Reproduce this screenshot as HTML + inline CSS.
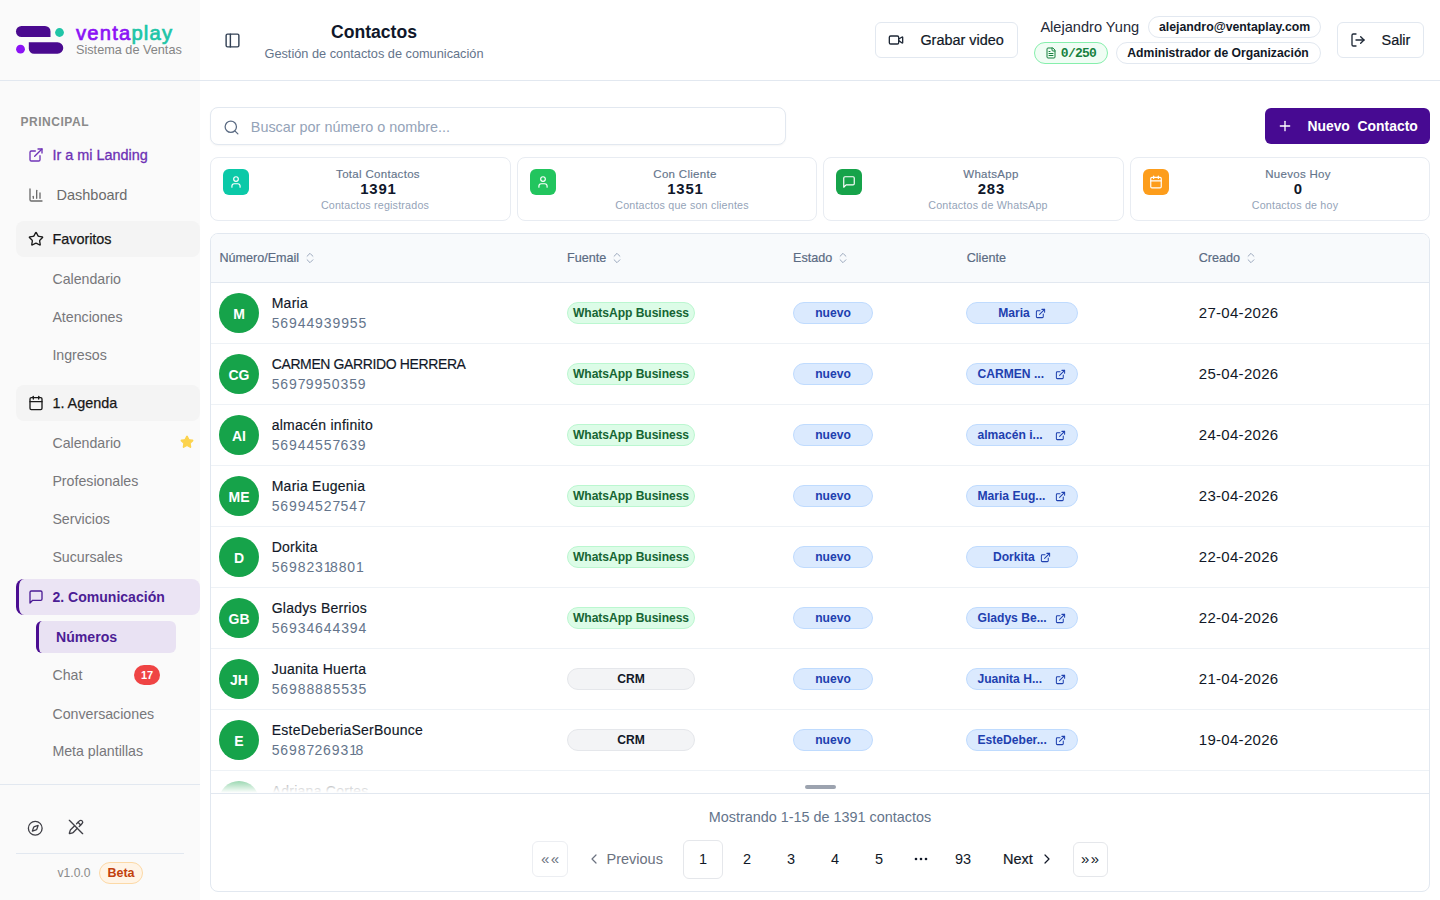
<!DOCTYPE html>
<html><head><meta charset="utf-8">
<style>
*{box-sizing:border-box;margin:0;padding:0}
html,body{width:1440px;height:900px;overflow:hidden;background:#fff;font-family:"Liberation Sans",sans-serif;color:#111827}
.t{position:absolute;white-space:nowrap;line-height:1}
.b{position:absolute}
svg{position:absolute;overflow:visible}
</style></head>
<body>
<div class="b" style="left:0px;top:0px;width:200px;height:900px;background:#fafafa"></div>
<div class="b" style="left:0px;top:80px;width:1440px;height:1px;background:#e2e8f0"></div>
<svg style="left:0;top:0" width="200" height="80">
  <path d="M21.5 26 H45 a5.5 5.5 0 0 1 5.5 5.5 V37 H21.5 a5.5 5.5 0 0 1 0 -11 Z" fill="#4a0a8f"/>
  <circle cx="59.5" cy="32.5" r="4.4" fill="#20c5a7"/>
  <circle cx="20.5" cy="49.2" r="4.4" fill="#8b12f5"/>
  <path d="M28.8 42.2 H57.5 a5.75 5.75 0 0 1 0 11.5 H34 a5.2 5.2 0 0 1 -5.2 -5.2 Z" fill="#4a0a8f"/>
</svg>
<div class="t" style="left:76.00px;top:22.70px;font-size:20.2px;color:#111827;font-weight:normal;letter-spacing:1.2px"><span style="color:#8b12f5;-webkit-text-stroke:0.7px #8b12f5">venta</span><span style="color:#20c5a7;-webkit-text-stroke:0.7px #20c5a7">play</span></div>
<div class="t" style="left:76.00px;top:43.80px;font-size:12.7px;color:#858585;font-weight:normal;">Sistema de Ventas</div>
<div class="t" style="left:20.40px;top:115.84px;font-size:12px;color:#8a8a8a;font-weight:bold;letter-spacing:0.55px">PRINCIPAL</div>
<svg style="left:28px;top:147px" width="16" height="16" viewBox="0 0 24 24" fill="none" stroke="#7034b8" stroke-width="2" stroke-linecap="round" stroke-linejoin="round"><path d="M15 3h6v6"/><path d="M10 14 21 3"/><path d="M18 13v6a2 2 0 0 1-2 2H5a2 2 0 0 1-2-2V8a2 2 0 0 1 2-2h6"/></svg>
<div class="t" style="left:52.40px;top:148.17px;font-size:14.45px;color:#6d31b5;font-weight:normal;-webkit-text-stroke:0.3px #6d31b5">Ir a mi Landing</div>
<svg style="left:28px;top:187px" width="16" height="16" viewBox="0 0 24 24" fill="none" stroke="#6b6b6b" stroke-width="2" stroke-linecap="round" stroke-linejoin="round"><path d="M3 3v16a2 2 0 0 0 2 2h16"/><path d="M18 17V9"/><path d="M13 17V5"/><path d="M8 17v-3"/></svg>
<div class="t" style="left:56.50px;top:188.43px;font-size:14.5px;color:#6b6b6b;font-weight:normal;">Dashboard</div>
<div class="b" style="left:16px;top:221px;width:184px;height:36px;background:#f4f4f4;border-radius:8px"></div>
<svg style="left:28px;top:231px" width="16" height="16" viewBox="0 0 24 24" fill="none" stroke="#1a1a1a" stroke-width="2" stroke-linecap="round" stroke-linejoin="round"><path d="M11.525 2.295a.53.53 0 0 1 .95 0l2.31 4.679a2.123 2.123 0 0 0 1.595 1.16l5.166.756a.53.53 0 0 1 .294.904l-3.736 3.638a2.123 2.123 0 0 0-.611 1.878l.882 5.14a.53.53 0 0 1-.771.56l-4.618-2.428a2.122 2.122 0 0 0-1.973 0L6.396 21.01a.53.53 0 0 1-.77-.56l.881-5.139a2.122 2.122 0 0 0-.611-1.879L2.16 9.795a.53.53 0 0 1 .294-.906l5.165-.755a2.122 2.122 0 0 0 1.597-1.16z"/></svg>
<div class="t" style="left:52.40px;top:231.61px;font-size:14.4px;color:#171717;font-weight:normal;-webkit-text-stroke:0.25px #171717">Favoritos</div>
<div class="t" style="left:52.40px;top:271.78px;font-size:14.2px;color:#77777b;font-weight:normal;">Calendario</div>
<div class="t" style="left:52.40px;top:309.78px;font-size:14.2px;color:#77777b;font-weight:normal;">Atenciones</div>
<div class="t" style="left:52.40px;top:347.78px;font-size:14.2px;color:#77777b;font-weight:normal;">Ingresos</div>
<div class="b" style="left:16px;top:385px;width:184px;height:36px;background:#f4f4f4;border-radius:8px"></div>
<svg style="left:28px;top:395px" width="16" height="16" viewBox="0 0 24 24" fill="none" stroke="#1a1a1a" stroke-width="2" stroke-linecap="round" stroke-linejoin="round"><path d="M8 2v4"/><path d="M16 2v4"/><rect width="18" height="18" x="3" y="4" rx="2"/><path d="M3 10h18"/></svg>
<div class="t" style="left:52.40px;top:395.61px;font-size:14.4px;color:#171717;font-weight:normal;-webkit-text-stroke:0.25px #171717">1. Agenda</div>
<div class="t" style="left:52.40px;top:435.78px;font-size:14.2px;color:#77777b;font-weight:normal;">Calendario</div>
<div class="t" style="left:52.40px;top:473.78px;font-size:14.2px;color:#77777b;font-weight:normal;">Profesionales</div>
<div class="t" style="left:52.40px;top:511.78px;font-size:14.2px;color:#77777b;font-weight:normal;">Servicios</div>
<div class="t" style="left:52.40px;top:549.78px;font-size:14.2px;color:#77777b;font-weight:normal;">Sucursales</div>
<svg style="left:179.5px;top:435px" width="14" height="14" viewBox="0 0 24 24" fill="none" stroke="#fcd34d" stroke-width="2" stroke-linecap="round" stroke-linejoin="round"><path fill="#fcd34d" d="M11.525 2.295a.53.53 0 0 1 .95 0l2.31 4.679a2.123 2.123 0 0 0 1.595 1.16l5.166.756a.53.53 0 0 1 .294.904l-3.736 3.638a2.123 2.123 0 0 0-.611 1.878l.882 5.14a.53.53 0 0 1-.771.56l-4.618-2.428a2.122 2.122 0 0 0-1.973 0L6.396 21.01a.53.53 0 0 1-.77-.56l.881-5.139a2.122 2.122 0 0 0-.611-1.879L2.16 9.795a.53.53 0 0 1 .294-.906l5.165-.755a2.122 2.122 0 0 0 1.597-1.16z"/></svg>
<div class="b" style="left:16px;top:579px;width:184px;height:36px;background:#ebe4f4;border-radius:8px;border-left:3.5px solid #4a0d91"></div>
<svg style="left:28px;top:589px" width="16" height="16" viewBox="0 0 24 24" fill="none" stroke="#4c1d95" stroke-width="2" stroke-linecap="round" stroke-linejoin="round"><path d="M21 15a2 2 0 0 1-2 2H7l-4 4V5a2 2 0 0 1 2-2h14a2 2 0 0 1 2 2z"/></svg>
<div class="t" style="left:52.40px;top:589.91px;font-size:14.05px;color:#4c1d95;font-weight:bold;">2. Comunicación</div>
<div class="b" style="left:36px;top:621px;width:140px;height:32px;background:#e9e2f3;border-radius:6px;border-left:3.5px solid #4a0d91"></div>
<div class="t" style="left:56.00px;top:630.26px;font-size:14.1px;color:#4c1d95;font-weight:bold;">Números</div>
<div class="t" style="left:52.40px;top:668.08px;font-size:14.2px;color:#77777b;font-weight:normal;">Chat</div>
<div class="b" style="left:134px;top:665px;width:26px;height:20px;background:#ef4444;border-radius:10px"></div>
<div class="t" style="left:-153.00px;width:600px;text-align:center;top:669.99px;font-size:11px;color:#fff;font-weight:bold;">17</div>
<div class="t" style="left:52.40px;top:706.58px;font-size:14.2px;color:#77777b;font-weight:normal;">Conversaciones</div>
<div class="t" style="left:52.40px;top:744.08px;font-size:14.2px;color:#77777b;font-weight:normal;">Meta plantillas</div>
<div class="b" style="left:0px;top:784px;width:200px;height:1px;background:#e2e8f0"></div>
<svg style="left:27.2px;top:819.5px" width="16.5" height="16.5" viewBox="0 0 24 24" fill="none" stroke="#3f3f46" stroke-width="1.9" stroke-linecap="round" stroke-linejoin="round"><circle cx="12" cy="12" r="10"/><path d="m16.24 7.76-1.804 5.411a2 2 0 0 1-1.265 1.265L7.76 16.24l1.804-5.411a2 2 0 0 1 1.265-1.265z"/></svg>
<svg style="left:68px;top:819px" width="16" height="16" viewBox="0 0 24 24" fill="none" stroke="#3f3f46" stroke-width="2" stroke-linecap="round" stroke-linejoin="round"><path d="m10 10-6.157 6.162a2 2 0 0 0-.5.833l-1.322 4.36a.5.5 0 0 0 .622.624l4.358-1.323a2 2 0 0 0 .83-.5L14 13.982"/><path d="m12.829 7.172 4.359-4.346a1 1 0 1 1 3.986 3.986l-4.353 4.353"/><path d="m15 5 4 4"/><path d="m2 2 20 20"/></svg>
<div class="b" style="left:16px;top:853px;width:168px;height:1px;background:#e2e8f0"></div>
<div class="t" style="left:57.60px;top:867.30px;font-size:12.05px;color:#8a8a8a;font-weight:normal;">v1.0.0</div>
<div class="b" style="left:99px;top:862px;width:44px;height:22px;background:#fff4e6;border:1px solid #fcd9a6;border-radius:11px"></div>
<div class="t" style="left:-179.00px;width:600px;text-align:center;top:867.22px;font-size:12.5px;color:#c2410c;font-weight:bold;">Beta</div>
<svg style="left:223.5px;top:31.5px" width="17" height="17" viewBox="0 0 24 24" fill="none" stroke="#334155" stroke-width="2" stroke-linecap="round" stroke-linejoin="round"><rect width="18" height="18" x="3" y="3" rx="2"/><path d="M9 3v18"/></svg>
<div class="t" style="left:74.00px;width:600px;text-align:center;top:23.90px;font-size:17.6px;color:#0f172a;font-weight:bold;">Contactos</div>
<div class="t" style="left:74.00px;width:600px;text-align:center;top:48.26px;font-size:12.75px;color:#64748b;font-weight:normal;">Gestión de contactos de comunicación</div>
<div class="b" style="left:875px;top:22px;width:143px;height:36px;border:1px solid #e2e8f0;border-radius:6px;background:#fff"></div>
<svg style="left:888px;top:32px" width="16" height="16" viewBox="0 0 24 24" fill="none" stroke="#1f2937" stroke-width="2" stroke-linecap="round" stroke-linejoin="round"><path d="m16 13 5.223 3.482a.5.5 0 0 0 .777-.416V7.87a.5.5 0 0 0-.752-.432L16 10.5"/><rect x="2" y="6" width="14" height="12" rx="2"/></svg>
<div class="t" style="left:920.40px;top:32.77px;font-size:14.45px;color:#111827;font-weight:normal;-webkit-text-stroke:0.2px #111827">Grabar video</div>
<div class="t" style="left:1040.40px;top:19.84px;font-size:14.6px;color:#1f2937;font-weight:normal;">Alejandro Yung</div>
<div class="b" style="left:1148px;top:16px;width:173px;height:22px;border:1px solid #e2e8f0;border-radius:11px;background:#fff"></div>
<div class="t" style="left:1159.00px;top:21.39px;font-size:12.3px;color:#111827;font-weight:bold;">alejandro@ventaplay.com</div>
<div class="b" style="left:1034px;top:42px;width:74px;height:22px;border:1px solid #86efac;border-radius:11px;background:#f0fdf4"></div>
<svg style="left:1045px;top:47px" width="12" height="12" viewBox="0 0 24 24" fill="none" stroke="#15803d" stroke-width="2" stroke-linecap="round" stroke-linejoin="round"><path d="M15 2H6a2 2 0 0 0-2 2v16a2 2 0 0 0 2 2h12a2 2 0 0 0 2-2V7Z"/><path d="M14 2v4a2 2 0 0 0 2 2h4"/><path d="M10 9H8"/><path d="M16 13H8"/><path d="M16 17H8"/></svg>
<div class="t" style="left:1060.8px;top:46.91px;font-size:13px;letter-spacing:-0.72px;color:#15803d;font-weight:bold;font-family:'Liberation Mono',monospace">0/250</div>
<div class="b" style="left:1116px;top:42px;width:205px;height:22px;border:1px solid #e2e8f0;border-radius:11px;background:#fff"></div>
<div class="t" style="left:1127.30px;top:47.37px;font-size:12.2px;color:#111827;font-weight:bold;">Administrador de Organización</div>
<div class="b" style="left:1337px;top:22px;width:87px;height:36px;border:1px solid #e2e8f0;border-radius:6px;background:#fff"></div>
<svg style="left:1350px;top:32px" width="16" height="16" viewBox="0 0 24 24" fill="none" stroke="#1f2937" stroke-width="2" stroke-linecap="round" stroke-linejoin="round"><path d="M9 21H5a2 2 0 0 1-2-2V5a2 2 0 0 1 2-2h4"/><polyline points="16 17 21 12 16 7"/><line x1="21" x2="9" y1="12" y2="12"/></svg>
<div class="t" style="left:1381.50px;top:32.77px;font-size:14.45px;color:#111827;font-weight:normal;-webkit-text-stroke:0.2px #111827">Salir</div>
<div class="b" style="left:210px;top:107px;width:576px;height:38px;border:1px solid #e2e8f0;border-radius:8px;background:#fff;box-shadow:0 1px 2px rgba(0,0,0,0.04)"></div>
<svg style="left:222.5px;top:118.5px" width="17" height="17" viewBox="0 0 24 24" fill="none" stroke="#5b6b83" stroke-width="1.8" stroke-linecap="round" stroke-linejoin="round"><circle cx="11" cy="11" r="8"/><path d="m21 21-4.3-4.3"/></svg>
<div class="t" style="left:250.80px;top:119.91px;font-size:14.4px;color:#94a3b8;font-weight:normal;">Buscar por número o nombre...</div>
<div class="b" style="left:1265px;top:108px;width:165px;height:36px;background:#470a92;border-radius:6px"></div>
<svg style="left:1277px;top:118px" width="16" height="16" viewBox="0 0 24 24" fill="none" stroke="#ffffff" stroke-width="2" stroke-linecap="round" stroke-linejoin="round"><path d="M5 12h14"/><path d="M12 5v14"/></svg>
<div class="t" style="left:1307.40px;top:120.03px;font-size:13.9px;color:#ffffff;font-weight:bold;">Nuevo&nbsp; Contacto</div>
<div class="b" style="left:210px;top:157px;width:301px;height:64px;border:1px solid #e8ecf2;border-radius:8px;background:#fff"></div>
<div class="b" style="left:222.5px;top:169px;width:26px;height:26px;background:#0bc9a8;border-radius:6px"></div>
<svg style="left:228.5px;top:175px" width="14" height="14" viewBox="0 0 24 24" fill="none" stroke="#ffffff" stroke-width="2" stroke-linecap="round" stroke-linejoin="round"><path d="M19 21v-2a4 4 0 0 0-4-4H9a4 4 0 0 0-4 4v2"/><circle cx="12" cy="7" r="4"/></svg>
<div class="t" style="left:78.00px;width:600px;text-align:center;top:169.07px;font-size:11.5px;color:#64748b;font-weight:normal;letter-spacing:0.3px;-webkit-text-stroke:0.15px #64748b">Total Contactos</div>
<div class="t" style="left:78.40px;width:600px;text-align:center;top:182.19px;font-size:14.9px;color:#0f172a;font-weight:bold;letter-spacing:0.8px">1391</div>
<div class="t" style="left:75.00px;width:600px;text-align:center;top:200.24px;font-size:10.7px;color:#94a3b8;font-weight:normal;letter-spacing:0.2px">Contactos registrados</div>
<div class="b" style="left:517px;top:157px;width:300px;height:64px;border:1px solid #e8ecf2;border-radius:8px;background:#fff"></div>
<div class="b" style="left:529.5px;top:169px;width:26px;height:26px;background:#22c55e;border-radius:6px"></div>
<svg style="left:535.5px;top:175px" width="14" height="14" viewBox="0 0 24 24" fill="none" stroke="#ffffff" stroke-width="2" stroke-linecap="round" stroke-linejoin="round"><path d="M19 21v-2a4 4 0 0 0-4-4H9a4 4 0 0 0-4 4v2"/><circle cx="12" cy="7" r="4"/></svg>
<div class="t" style="left:385.00px;width:600px;text-align:center;top:169.07px;font-size:11.5px;color:#64748b;font-weight:normal;letter-spacing:0.3px;-webkit-text-stroke:0.15px #64748b">Con Cliente</div>
<div class="t" style="left:385.40px;width:600px;text-align:center;top:182.19px;font-size:14.9px;color:#0f172a;font-weight:bold;letter-spacing:0.8px">1351</div>
<div class="t" style="left:382.00px;width:600px;text-align:center;top:200.24px;font-size:10.7px;color:#94a3b8;font-weight:normal;letter-spacing:0.2px">Contactos que son clientes</div>
<div class="b" style="left:823px;top:157px;width:301px;height:64px;border:1px solid #e8ecf2;border-radius:8px;background:#fff"></div>
<div class="b" style="left:835.5px;top:169px;width:26px;height:26px;background:#16a34a;border-radius:6px"></div>
<svg style="left:841.5px;top:175px" width="14" height="14" viewBox="0 0 24 24" fill="none" stroke="#ffffff" stroke-width="2" stroke-linecap="round" stroke-linejoin="round"><path d="M21 15a2 2 0 0 1-2 2H7l-4 4V5a2 2 0 0 1 2-2h14a2 2 0 0 1 2 2z"/></svg>
<div class="t" style="left:691.00px;width:600px;text-align:center;top:169.07px;font-size:11.5px;color:#64748b;font-weight:normal;letter-spacing:0.3px;-webkit-text-stroke:0.15px #64748b">WhatsApp</div>
<div class="t" style="left:691.40px;width:600px;text-align:center;top:182.19px;font-size:14.9px;color:#0f172a;font-weight:bold;letter-spacing:0.8px">283</div>
<div class="t" style="left:688.00px;width:600px;text-align:center;top:200.24px;font-size:10.7px;color:#94a3b8;font-weight:normal;letter-spacing:0.2px">Contactos de WhatsApp</div>
<div class="b" style="left:1130px;top:157px;width:300px;height:64px;border:1px solid #e8ecf2;border-radius:8px;background:#fff"></div>
<div class="b" style="left:1142.5px;top:169px;width:26px;height:26px;background:#fd9d1b;border-radius:6px"></div>
<svg style="left:1148.5px;top:175px" width="14" height="14" viewBox="0 0 24 24" fill="none" stroke="#ffffff" stroke-width="2" stroke-linecap="round" stroke-linejoin="round"><path d="M8 2v4"/><path d="M16 2v4"/><rect width="18" height="18" x="3" y="4" rx="2"/><path d="M3 10h18"/></svg>
<div class="t" style="left:998.00px;width:600px;text-align:center;top:169.07px;font-size:11.5px;color:#64748b;font-weight:normal;letter-spacing:0.3px;-webkit-text-stroke:0.15px #64748b">Nuevos Hoy</div>
<div class="t" style="left:998.40px;width:600px;text-align:center;top:182.19px;font-size:14.9px;color:#0f172a;font-weight:bold;letter-spacing:0.8px">0</div>
<div class="t" style="left:995.00px;width:600px;text-align:center;top:200.24px;font-size:10.7px;color:#94a3b8;font-weight:normal;letter-spacing:0.2px">Contactos de hoy</div>
<div class="b" style="left:210px;top:233px;width:1220px;height:659px;border:1px solid #e2e8f0;border-radius:8px;background:#fff;overflow:hidden"></div>
<div class="b" style="left:211px;top:234px;width:1218px;height:48.5px;background:#f8fafc;border-radius:7px 7px 0 0"></div>
<div class="b" style="left:211px;top:282px;width:1218px;height:1px;background:#e2e8f0"></div>
<div class="t" style="left:219.40px;top:251.83px;font-size:12.6px;color:#5b6b83;font-weight:normal;-webkit-text-stroke:0.2px #5b6b83">Número/Email</div>
<svg style="left:302.723953125px;top:251px" width="14" height="14" viewBox="0 0 24 24" fill="none" stroke="#94a3b8" stroke-width="1.6" stroke-linecap="round" stroke-linejoin="round"><path d="m7 15 5 5 5-5"/><path d="m7 9 5-5 5 5"/></svg>
<div class="t" style="left:567.00px;top:251.83px;font-size:12.6px;color:#5b6b83;font-weight:normal;-webkit-text-stroke:0.2px #5b6b83">Fuente</div>
<svg style="left:609.728328125px;top:251px" width="14" height="14" viewBox="0 0 24 24" fill="none" stroke="#94a3b8" stroke-width="1.6" stroke-linecap="round" stroke-linejoin="round"><path d="m7 15 5 5 5-5"/><path d="m7 9 5-5 5 5"/></svg>
<div class="t" style="left:793.10px;top:251.83px;font-size:12.6px;color:#5b6b83;font-weight:normal;-webkit-text-stroke:0.2px #5b6b83">Estado</div>
<svg style="left:835.828328125px;top:251px" width="14" height="14" viewBox="0 0 24 24" fill="none" stroke="#94a3b8" stroke-width="1.6" stroke-linecap="round" stroke-linejoin="round"><path d="m7 15 5 5 5-5"/><path d="m7 9 5-5 5 5"/></svg>
<div class="t" style="left:966.70px;top:251.83px;font-size:12.6px;color:#5b6b83;font-weight:normal;-webkit-text-stroke:0.2px #5b6b83">Cliente</div>
<div class="t" style="left:1198.75px;top:251.83px;font-size:12.6px;color:#5b6b83;font-weight:normal;-webkit-text-stroke:0.2px #5b6b83">Creado</div>
<svg style="left:1243.577015625px;top:251px" width="14" height="14" viewBox="0 0 24 24" fill="none" stroke="#94a3b8" stroke-width="1.6" stroke-linecap="round" stroke-linejoin="round"><path d="m7 15 5 5 5-5"/><path d="m7 9 5-5 5 5"/></svg>
<div class="b" style="left:211px;top:283px;width:1218px;height:510.5px;overflow:hidden">
<div class="b" style="left:0px;top:60px;width:1218px;height:1px;background:#eef2f6"></div>
<div class="b" style="left:8px;top:10px;width:40px;height:40px;background:#16a34a;border-radius:50%"></div>
<div class="t" style="left:-272.00px;width:600px;text-align:center;top:23.55px;font-size:14px;color:#ffffff;font-weight:bold;">M</div>
<div class="t" style="left:60.70px;top:12.95px;font-size:14px;color:#111827;font-weight:normal;letter-spacing:0.25px;-webkit-text-stroke:0.15px #111827">Maria</div>
<div class="t" style="left:60.70px;top:33.15px;font-size:14px;color:#64748b;font-weight:normal;letter-spacing:0.9px">56944939955</div>
<div class="b" style="left:356px;top:19px;width:128px;height:22px;background:#dcfce7;border:1px solid #bbf7d0;border-radius:11px"></div>
<div class="t" style="left:120.00px;width:600px;text-align:center;top:23.86px;font-size:12.1px;color:#166534;font-weight:bold;letter-spacing:-0.05px">WhatsApp Business</div>
<div class="b" style="left:582px;top:19px;width:80px;height:22px;background:#dbeafe;border:1px solid #bfdbfe;border-radius:11px"></div>
<div class="t" style="left:322.00px;width:600px;text-align:center;top:23.86px;font-size:12.1px;color:#1e40af;font-weight:bold;">nuevo</div>
<div class="b" style="left:755px;top:19px;width:112px;height:22px;background:#dbeafe;border:1px solid #bfdbfe;border-radius:11px"></div>
<div class="t" style="left:787.17px;top:23.86px;font-size:12.1px;color:#1e40af;font-weight:bold;">Maria</div>
<svg style="left:823.8271484375px;top:24.5px" width="11" height="11" viewBox="0 0 24 24" fill="none" stroke="#1e40af" stroke-width="2.2" stroke-linecap="round" stroke-linejoin="round"><path d="M15 3h6v6"/><path d="M10 14 21 3"/><path d="M18 13v6a2 2 0 0 1-2 2H5a2 2 0 0 1-2-2V8a2 2 0 0 1 2-2h6"/></svg>
<div class="t" style="left:987.75px;top:22.30px;font-size:15px;color:#111827;font-weight:normal;letter-spacing:0.3px">27-04-2026</div>
<div class="b" style="left:0px;top:121px;width:1218px;height:1px;background:#eef2f6"></div>
<div class="b" style="left:8px;top:71px;width:40px;height:40px;background:#16a34a;border-radius:50%"></div>
<div class="t" style="left:-272.00px;width:600px;text-align:center;top:84.55px;font-size:14px;color:#ffffff;font-weight:bold;">CG</div>
<div class="t" style="left:60.70px;top:73.95px;font-size:14px;color:#111827;font-weight:normal;letter-spacing:-0.38px;-webkit-text-stroke:0.15px #111827">CARMEN GARRIDO HERRERA</div>
<div class="t" style="left:60.70px;top:94.15px;font-size:14px;color:#64748b;font-weight:normal;letter-spacing:0.9px">569<span style="letter-spacing:0.2px">7</span>9950359</div>
<div class="b" style="left:356px;top:80px;width:128px;height:22px;background:#dcfce7;border:1px solid #bbf7d0;border-radius:11px"></div>
<div class="t" style="left:120.00px;width:600px;text-align:center;top:84.86px;font-size:12.1px;color:#166534;font-weight:bold;letter-spacing:-0.05px">WhatsApp Business</div>
<div class="b" style="left:582px;top:80px;width:80px;height:22px;background:#dbeafe;border:1px solid #bfdbfe;border-radius:11px"></div>
<div class="t" style="left:322.00px;width:600px;text-align:center;top:84.86px;font-size:12.1px;color:#1e40af;font-weight:bold;">nuevo</div>
<div class="b" style="left:755px;top:80px;width:112px;height:22px;background:#dbeafe;border:1px solid #bfdbfe;border-radius:11px"></div>
<div class="t" style="left:766.50px;top:84.86px;font-size:12.1px;color:#1e40af;font-weight:bold;">CARMEN ...</div>
<svg style="left:844px;top:85.5px" width="11" height="11" viewBox="0 0 24 24" fill="none" stroke="#1e40af" stroke-width="2.2" stroke-linecap="round" stroke-linejoin="round"><path d="M15 3h6v6"/><path d="M10 14 21 3"/><path d="M18 13v6a2 2 0 0 1-2 2H5a2 2 0 0 1-2-2V8a2 2 0 0 1 2-2h6"/></svg>
<div class="t" style="left:987.75px;top:83.30px;font-size:15px;color:#111827;font-weight:normal;letter-spacing:0.3px">25-04-2026</div>
<div class="b" style="left:0px;top:182px;width:1218px;height:1px;background:#eef2f6"></div>
<div class="b" style="left:8px;top:132px;width:40px;height:40px;background:#16a34a;border-radius:50%"></div>
<div class="t" style="left:-272.00px;width:600px;text-align:center;top:145.55px;font-size:14px;color:#ffffff;font-weight:bold;">AI</div>
<div class="t" style="left:60.70px;top:134.95px;font-size:14px;color:#111827;font-weight:normal;letter-spacing:0.25px;-webkit-text-stroke:0.15px #111827">almacén infinito</div>
<div class="t" style="left:60.70px;top:155.15px;font-size:14px;color:#64748b;font-weight:normal;letter-spacing:0.9px">5694455<span style="letter-spacing:0.2px">7</span>639</div>
<div class="b" style="left:356px;top:141px;width:128px;height:22px;background:#dcfce7;border:1px solid #bbf7d0;border-radius:11px"></div>
<div class="t" style="left:120.00px;width:600px;text-align:center;top:145.86px;font-size:12.1px;color:#166534;font-weight:bold;letter-spacing:-0.05px">WhatsApp Business</div>
<div class="b" style="left:582px;top:141px;width:80px;height:22px;background:#dbeafe;border:1px solid #bfdbfe;border-radius:11px"></div>
<div class="t" style="left:322.00px;width:600px;text-align:center;top:145.86px;font-size:12.1px;color:#1e40af;font-weight:bold;">nuevo</div>
<div class="b" style="left:755px;top:141px;width:112px;height:22px;background:#dbeafe;border:1px solid #bfdbfe;border-radius:11px"></div>
<div class="t" style="left:766.50px;top:145.86px;font-size:12.1px;color:#1e40af;font-weight:bold;">almacén i...</div>
<svg style="left:844px;top:146.5px" width="11" height="11" viewBox="0 0 24 24" fill="none" stroke="#1e40af" stroke-width="2.2" stroke-linecap="round" stroke-linejoin="round"><path d="M15 3h6v6"/><path d="M10 14 21 3"/><path d="M18 13v6a2 2 0 0 1-2 2H5a2 2 0 0 1-2-2V8a2 2 0 0 1 2-2h6"/></svg>
<div class="t" style="left:987.75px;top:144.30px;font-size:15px;color:#111827;font-weight:normal;letter-spacing:0.3px">24-04-2026</div>
<div class="b" style="left:0px;top:243px;width:1218px;height:1px;background:#eef2f6"></div>
<div class="b" style="left:8px;top:193px;width:40px;height:40px;background:#16a34a;border-radius:50%"></div>
<div class="t" style="left:-272.00px;width:600px;text-align:center;top:206.55px;font-size:14px;color:#ffffff;font-weight:bold;">ME</div>
<div class="t" style="left:60.70px;top:195.95px;font-size:14px;color:#111827;font-weight:normal;letter-spacing:0.25px;-webkit-text-stroke:0.15px #111827">Maria Eugenia</div>
<div class="t" style="left:60.70px;top:216.15px;font-size:14px;color:#64748b;font-weight:normal;letter-spacing:0.9px">5699452<span style="letter-spacing:0.2px">7</span>54<span style="letter-spacing:0.2px">7</span></div>
<div class="b" style="left:356px;top:202px;width:128px;height:22px;background:#dcfce7;border:1px solid #bbf7d0;border-radius:11px"></div>
<div class="t" style="left:120.00px;width:600px;text-align:center;top:206.86px;font-size:12.1px;color:#166534;font-weight:bold;letter-spacing:-0.05px">WhatsApp Business</div>
<div class="b" style="left:582px;top:202px;width:80px;height:22px;background:#dbeafe;border:1px solid #bfdbfe;border-radius:11px"></div>
<div class="t" style="left:322.00px;width:600px;text-align:center;top:206.86px;font-size:12.1px;color:#1e40af;font-weight:bold;">nuevo</div>
<div class="b" style="left:755px;top:202px;width:112px;height:22px;background:#dbeafe;border:1px solid #bfdbfe;border-radius:11px"></div>
<div class="t" style="left:766.50px;top:206.86px;font-size:12.1px;color:#1e40af;font-weight:bold;">Maria Eug...</div>
<svg style="left:844px;top:207.5px" width="11" height="11" viewBox="0 0 24 24" fill="none" stroke="#1e40af" stroke-width="2.2" stroke-linecap="round" stroke-linejoin="round"><path d="M15 3h6v6"/><path d="M10 14 21 3"/><path d="M18 13v6a2 2 0 0 1-2 2H5a2 2 0 0 1-2-2V8a2 2 0 0 1 2-2h6"/></svg>
<div class="t" style="left:987.75px;top:205.30px;font-size:15px;color:#111827;font-weight:normal;letter-spacing:0.3px">23-04-2026</div>
<div class="b" style="left:0px;top:304px;width:1218px;height:1px;background:#eef2f6"></div>
<div class="b" style="left:8px;top:254px;width:40px;height:40px;background:#16a34a;border-radius:50%"></div>
<div class="t" style="left:-272.00px;width:600px;text-align:center;top:267.55px;font-size:14px;color:#ffffff;font-weight:bold;">D</div>
<div class="t" style="left:60.70px;top:256.95px;font-size:14px;color:#111827;font-weight:normal;letter-spacing:0.25px;-webkit-text-stroke:0.15px #111827">Dorkita</div>
<div class="t" style="left:60.70px;top:277.15px;font-size:14px;color:#64748b;font-weight:normal;letter-spacing:0.9px">569823<span style="letter-spacing:-1.6px">1</span>880<span style="letter-spacing:-1.6px">1</span></div>
<div class="b" style="left:356px;top:263px;width:128px;height:22px;background:#dcfce7;border:1px solid #bbf7d0;border-radius:11px"></div>
<div class="t" style="left:120.00px;width:600px;text-align:center;top:267.86px;font-size:12.1px;color:#166534;font-weight:bold;letter-spacing:-0.05px">WhatsApp Business</div>
<div class="b" style="left:582px;top:263px;width:80px;height:22px;background:#dbeafe;border:1px solid #bfdbfe;border-radius:11px"></div>
<div class="t" style="left:322.00px;width:600px;text-align:center;top:267.86px;font-size:12.1px;color:#1e40af;font-weight:bold;">nuevo</div>
<div class="b" style="left:755px;top:263px;width:112px;height:22px;background:#dbeafe;border:1px solid #bfdbfe;border-radius:11px"></div>
<div class="t" style="left:781.97px;top:267.86px;font-size:12.1px;color:#1e40af;font-weight:bold;">Dorkita</div>
<svg style="left:829.03369140625px;top:268.5px" width="11" height="11" viewBox="0 0 24 24" fill="none" stroke="#1e40af" stroke-width="2.2" stroke-linecap="round" stroke-linejoin="round"><path d="M15 3h6v6"/><path d="M10 14 21 3"/><path d="M18 13v6a2 2 0 0 1-2 2H5a2 2 0 0 1-2-2V8a2 2 0 0 1 2-2h6"/></svg>
<div class="t" style="left:987.75px;top:266.30px;font-size:15px;color:#111827;font-weight:normal;letter-spacing:0.3px">22-04-2026</div>
<div class="b" style="left:0px;top:365px;width:1218px;height:1px;background:#eef2f6"></div>
<div class="b" style="left:8px;top:315px;width:40px;height:40px;background:#16a34a;border-radius:50%"></div>
<div class="t" style="left:-272.00px;width:600px;text-align:center;top:328.55px;font-size:14px;color:#ffffff;font-weight:bold;">GB</div>
<div class="t" style="left:60.70px;top:317.95px;font-size:14px;color:#111827;font-weight:normal;letter-spacing:0.25px;-webkit-text-stroke:0.15px #111827">Gladys Berrios</div>
<div class="t" style="left:60.70px;top:338.15px;font-size:14px;color:#64748b;font-weight:normal;letter-spacing:0.9px">56934644394</div>
<div class="b" style="left:356px;top:324px;width:128px;height:22px;background:#dcfce7;border:1px solid #bbf7d0;border-radius:11px"></div>
<div class="t" style="left:120.00px;width:600px;text-align:center;top:328.86px;font-size:12.1px;color:#166534;font-weight:bold;letter-spacing:-0.05px">WhatsApp Business</div>
<div class="b" style="left:582px;top:324px;width:80px;height:22px;background:#dbeafe;border:1px solid #bfdbfe;border-radius:11px"></div>
<div class="t" style="left:322.00px;width:600px;text-align:center;top:328.86px;font-size:12.1px;color:#1e40af;font-weight:bold;">nuevo</div>
<div class="b" style="left:755px;top:324px;width:112px;height:22px;background:#dbeafe;border:1px solid #bfdbfe;border-radius:11px"></div>
<div class="t" style="left:766.50px;top:328.86px;font-size:12.1px;color:#1e40af;font-weight:bold;">Gladys Be...</div>
<svg style="left:844px;top:329.5px" width="11" height="11" viewBox="0 0 24 24" fill="none" stroke="#1e40af" stroke-width="2.2" stroke-linecap="round" stroke-linejoin="round"><path d="M15 3h6v6"/><path d="M10 14 21 3"/><path d="M18 13v6a2 2 0 0 1-2 2H5a2 2 0 0 1-2-2V8a2 2 0 0 1 2-2h6"/></svg>
<div class="t" style="left:987.75px;top:327.30px;font-size:15px;color:#111827;font-weight:normal;letter-spacing:0.3px">22-04-2026</div>
<div class="b" style="left:0px;top:426px;width:1218px;height:1px;background:#eef2f6"></div>
<div class="b" style="left:8px;top:376px;width:40px;height:40px;background:#16a34a;border-radius:50%"></div>
<div class="t" style="left:-272.00px;width:600px;text-align:center;top:389.55px;font-size:14px;color:#ffffff;font-weight:bold;">JH</div>
<div class="t" style="left:60.70px;top:378.95px;font-size:14px;color:#111827;font-weight:normal;letter-spacing:0.25px;-webkit-text-stroke:0.15px #111827">Juanita Huerta</div>
<div class="t" style="left:60.70px;top:399.15px;font-size:14px;color:#64748b;font-weight:normal;letter-spacing:0.9px">56988885535</div>
<div class="b" style="left:356px;top:385px;width:128px;height:22px;background:#f3f4f6;border:1px solid #e5e7eb;border-radius:11px"></div>
<div class="t" style="left:120.00px;width:600px;text-align:center;top:389.86px;font-size:12.1px;color:#111827;font-weight:bold;">CRM</div>
<div class="b" style="left:582px;top:385px;width:80px;height:22px;background:#dbeafe;border:1px solid #bfdbfe;border-radius:11px"></div>
<div class="t" style="left:322.00px;width:600px;text-align:center;top:389.86px;font-size:12.1px;color:#1e40af;font-weight:bold;">nuevo</div>
<div class="b" style="left:755px;top:385px;width:112px;height:22px;background:#dbeafe;border:1px solid #bfdbfe;border-radius:11px"></div>
<div class="t" style="left:766.50px;top:389.86px;font-size:12.1px;color:#1e40af;font-weight:bold;">Juanita H...</div>
<svg style="left:844px;top:390.5px" width="11" height="11" viewBox="0 0 24 24" fill="none" stroke="#1e40af" stroke-width="2.2" stroke-linecap="round" stroke-linejoin="round"><path d="M15 3h6v6"/><path d="M10 14 21 3"/><path d="M18 13v6a2 2 0 0 1-2 2H5a2 2 0 0 1-2-2V8a2 2 0 0 1 2-2h6"/></svg>
<div class="t" style="left:987.75px;top:388.30px;font-size:15px;color:#111827;font-weight:normal;letter-spacing:0.3px">21-04-2026</div>
<div class="b" style="left:0px;top:487px;width:1218px;height:1px;background:#eef2f6"></div>
<div class="b" style="left:8px;top:437px;width:40px;height:40px;background:#16a34a;border-radius:50%"></div>
<div class="t" style="left:-272.00px;width:600px;text-align:center;top:450.55px;font-size:14px;color:#ffffff;font-weight:bold;">E</div>
<div class="t" style="left:60.70px;top:439.95px;font-size:14px;color:#111827;font-weight:normal;letter-spacing:0.25px;-webkit-text-stroke:0.15px #111827">EsteDeberiaSerBounce</div>
<div class="t" style="left:60.70px;top:460.15px;font-size:14px;color:#64748b;font-weight:normal;letter-spacing:0.9px">5698<span style="letter-spacing:0.2px">7</span>2693<span style="letter-spacing:-1.6px">1</span>8</div>
<div class="b" style="left:356px;top:446px;width:128px;height:22px;background:#f3f4f6;border:1px solid #e5e7eb;border-radius:11px"></div>
<div class="t" style="left:120.00px;width:600px;text-align:center;top:450.86px;font-size:12.1px;color:#111827;font-weight:bold;">CRM</div>
<div class="b" style="left:582px;top:446px;width:80px;height:22px;background:#dbeafe;border:1px solid #bfdbfe;border-radius:11px"></div>
<div class="t" style="left:322.00px;width:600px;text-align:center;top:450.86px;font-size:12.1px;color:#1e40af;font-weight:bold;">nuevo</div>
<div class="b" style="left:755px;top:446px;width:112px;height:22px;background:#dbeafe;border:1px solid #bfdbfe;border-radius:11px"></div>
<div class="t" style="left:766.50px;top:450.86px;font-size:12.1px;color:#1e40af;font-weight:bold;">EsteDeber...</div>
<svg style="left:844px;top:451.5px" width="11" height="11" viewBox="0 0 24 24" fill="none" stroke="#1e40af" stroke-width="2.2" stroke-linecap="round" stroke-linejoin="round"><path d="M15 3h6v6"/><path d="M10 14 21 3"/><path d="M18 13v6a2 2 0 0 1-2 2H5a2 2 0 0 1-2-2V8a2 2 0 0 1 2-2h6"/></svg>
<div class="t" style="left:987.75px;top:449.30px;font-size:15px;color:#111827;font-weight:normal;letter-spacing:0.3px">19-04-2026</div>
<div class="b" style="left:0px;top:548px;width:1218px;height:1px;background:#eef2f6"></div>
<div class="b" style="left:8px;top:498px;width:40px;height:40px;background:#16a34a;border-radius:50%"></div>
<div class="t" style="left:-272.00px;width:600px;text-align:center;top:511.55px;font-size:14px;color:#ffffff;font-weight:bold;">AC</div>
<div class="t" style="left:60.70px;top:500.95px;font-size:14px;color:#111827;font-weight:normal;letter-spacing:0.25px;-webkit-text-stroke:0.15px #111827">Adriana Cortes</div>
<div class="t" style="left:60.70px;top:521.15px;font-size:14px;color:#64748b;font-weight:normal;letter-spacing:0.9px">56900000000</div>
<div class="b" style="left:0px;top:489px;width:1218px;height:22px;background:linear-gradient(to bottom,rgba(255,255,255,0.25),rgba(255,255,255,1) 95%)"></div>
</div>
<div class="b" style="left:211px;top:793px;width:1218px;height:1px;background:#e2e8f0"></div>
<div class="b" style="left:804.5px;top:784.5px;width:31.5px;height:4.5px;background:#9ca3af;border-radius:3px"></div>
<div class="t" style="left:520.00px;width:600px;text-align:center;top:809.61px;font-size:14.4px;color:#64748b;font-weight:normal;">Mostrando 1-15 de 1391 contactos</div>
<div class="b" style="left:532px;top:841px;width:35.5px;height:35.5px;border:1px solid #eceef2;border-radius:6px"></div>
<div class="t" style="left:250.00px;width:600px;text-align:center;top:851.10px;font-size:15px;color:#6b7280;font-weight:normal;letter-spacing:0px">«&#8202;«</div>
<svg style="left:586px;top:851px" width="16" height="16" viewBox="0 0 24 24" fill="none" stroke="#6b7280" stroke-width="1.8" stroke-linecap="round" stroke-linejoin="round"><path d="m15 18-6-6 6-6"/></svg>
<div class="t" style="left:606.50px;top:852.13px;font-size:14.5px;color:#6b7280;font-weight:normal;">Previous</div>
<div class="b" style="left:683px;top:839.5px;width:40px;height:39px;border:1px solid #e5e7eb;border-radius:6px"></div>
<div class="t" style="left:403.00px;width:600px;text-align:center;top:851.83px;font-size:14.5px;color:#111827;font-weight:normal;">1</div>
<div class="t" style="left:447.00px;width:600px;text-align:center;top:851.83px;font-size:14.5px;color:#111827;font-weight:normal;">2</div>
<div class="t" style="left:491.00px;width:600px;text-align:center;top:851.83px;font-size:14.5px;color:#111827;font-weight:normal;">3</div>
<div class="t" style="left:535.00px;width:600px;text-align:center;top:851.83px;font-size:14.5px;color:#111827;font-weight:normal;">4</div>
<div class="t" style="left:579.00px;width:600px;text-align:center;top:851.83px;font-size:14.5px;color:#111827;font-weight:normal;">5</div>
<div class="t" style="left:663.00px;width:600px;text-align:center;top:851.83px;font-size:14.5px;color:#111827;font-weight:normal;">93</div>
<svg style="left:913px;top:855px" width="16" height="8"><circle cx="3" cy="4" r="1.3" fill="#111827"/><circle cx="8" cy="4" r="1.3" fill="#111827"/><circle cx="13" cy="4" r="1.3" fill="#111827"/></svg>
<div class="t" style="left:1003.00px;top:851.83px;font-size:14.5px;color:#111827;font-weight:normal;-webkit-text-stroke:0.2px #111827">Next</div>
<svg style="left:1039px;top:851px" width="16" height="16" viewBox="0 0 24 24" fill="none" stroke="#111827" stroke-width="1.8" stroke-linecap="round" stroke-linejoin="round"><path d="m9 18 6-6-6-6"/></svg>
<div class="b" style="left:1072.5px;top:841.5px;width:35px;height:35px;border:1px solid #e5e7eb;border-radius:6px"></div>
<div class="t" style="left:790.00px;width:600px;text-align:center;top:851.10px;font-size:15px;color:#111827;font-weight:normal;letter-spacing:0px">»&#8202;»</div>
</body></html>
